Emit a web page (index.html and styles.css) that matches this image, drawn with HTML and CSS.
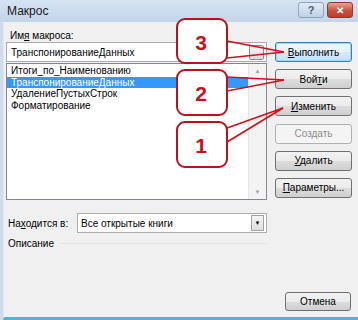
FILE: index.html
```html
<!DOCTYPE html>
<html>
<head>
<title>Макрос</title>
<link rel="stylesheet" href="styles.css">
</head>
<body>
<div class="window">
  <div class="titlebar">
    <span class="title">Макрос</span>
    <div class="caption-buttons">
      <span class="help-btn">?</span>
      <span class="close-btn">&#x2715;</span>
    </div>
  </div>
  <div class="dialog">
    <div class="main">
      <div class="left">
        <div class="field-label">Им<u>я</u> макроса:</div>
        <div class="name-input">
          <span>ТранспонированиеДанных</span>
          <span class="ref-btn"></span>
        </div>
        <div class="macro-list">
          <ul class="items">
            <li>Итоги_по_Наименованию</li>
            <li class="selected">ТранспонированиеДанных</li>
            <li>УдалениеПустыхСтрок</li>
            <li>Форматирование</li>
          </ul>
          <div class="scrollbar">
            <span class="arrow">&#9650;</span>
            <span class="arrow">&#9660;</span>
          </div>
        </div>
      </div>
      <div class="actions">
        <button class="btn default"><u>В</u>ыполнить</button>
        <button class="btn">Вой<u>т</u>и</button>
        <button class="btn"><u>И</u>зменить</button>
        <button class="btn disabled">Создать</button>
        <button class="btn"><u>У</u>далить</button>
        <button class="btn"><u>П</u>араметры...</button>
      </div>
    </div>
    <div class="location">
      <span class="location-label">На<u>х</u>одится в:</span>
      <div class="combo">
        <span>Все открытые книги</span>
        <span class="combo-arrow">&#9660;</span>
      </div>
    </div>
    <div class="description">
      <span>Описание</span>
      <span class="group-line"></span>
    </div>
    <div class="footer">
      <button class="btn cancel">Отмена</button>
    </div>
  </div>

  <!-- callouts over the dialog -->
  <svg class="callouts" width="358" height="320" viewBox="0 0 358 320">
    <g class="pointer">
      <line x1="227" y1="41" x2="284" y2="52"/>
      <line x1="227" y1="58" x2="284" y2="52"/>
      <line x1="227" y1="77" x2="284" y2="80"/>
      <line x1="227" y1="91" x2="284" y2="80"/>
      <line x1="227" y1="128" x2="283" y2="108"/>
      <line x1="227" y1="142" x2="283" y2="108"/>
    </g>
    <rect class="bubble" x="177" y="19" width="50" height="44" rx="8"/>
    <rect class="bubble" x="177" y="70" width="50" height="45" rx="8"/>
    <rect class="bubble" x="177" y="122" width="50" height="45" rx="8"/>
    <text class="num" x="201" y="42">3</text>
    <text class="num" x="201" y="93">2</text>
    <text class="num" x="201" y="145">1</text>
  </svg>
</div>
</body>
</html>
```

FILE: styles.css
```css
body {
  margin: 0;
  font-family: "Liberation Sans", Arial, sans-serif;
  font-size: 10px;
  color: #000;
  background: #fff;
}

.window {
  position: relative;
  width: 358px;
  height: 320px;
  display: flex;
  flex-direction: column;
  background: #cfdcec;
  overflow: hidden;
}

/* Title bar */
.titlebar {
  height: 22px;
  display: flex;
  align-items: center;
  justify-content: space-between;
  padding: 0 5px 0 7px;
  background: linear-gradient(#d6e3f2, #c3d5ea);
  flex-shrink: 0;
}

.title {
  font-size: 12px;
  color: #1a1a1a;
}

.caption-buttons {
  display: flex;
  gap: 3px;
  align-self: flex-start;
  margin-top: 2px;
}

.help-btn,
.close-btn {
  width: 26px;
  height: 16px;
  border-radius: 3px;
  display: flex;
  align-items: center;
  justify-content: center;
  font-weight: bold;
  box-sizing: border-box;
}

.help-btn {
  background: linear-gradient(#e3ecf6, #bfd0e4);
  border: 1px solid #8ea5c2;
  color: #4a5d78;
  font-size: 11px;
}

.close-btn {
  background: linear-gradient(#e5a496, #c8503c 55%, #c23b28);
  border: 1px solid #8a3a30;
  color: #fff;
  font-size: 10px;
}

/* Dialog body */
.dialog {
  flex: 1;
  display: flex;
  flex-direction: column;
  background: #f0f0f0;
  margin-left: 3px;
  padding: 7px 0 0 2px;
  border-left: 1px solid #e2e8ef;
  border-bottom: 3px solid #4db6d6;
}

.main {
  display: flex;
}

.left {
  width: 261px;
  display: flex;
  flex-direction: column;
}

.field-label {
  height: 13px;
  line-height: 13px;
  padding-left: 4px;
}

.name-input {
  height: 20px;
  box-sizing: border-box;
  border: 1px solid #abadb3;
  background: #fff;
  display: flex;
  align-items: center;
  justify-content: space-between;
  padding: 0 2px 0 4px;
}

.ref-btn {
  width: 15px;
  height: 15px;
  box-sizing: border-box;
  border: 1px solid #8e8f8f;
  border-radius: 2px;
  background: linear-gradient(#f6f6f6, #dcdcdc);
}

.macro-list {
  margin-top: 1px;
  height: 137px;
  box-sizing: border-box;
  border: 1px solid #828790;
  background: #fff;
  display: flex;
}

.items {
  list-style: none;
  margin: 0;
  padding: 1px 0 0;
  flex: 1;
}

.items li {
  height: 11.5px;
  line-height: 11.5px;
  padding-left: 4px;
}

.items li.selected {
  background: #3399ff;
  color: #fff;
}

.scrollbar {
  width: 17px;
  background: #f3f3f3;
  border-left: 1px solid #e6e6e6;
  display: flex;
  flex-direction: column;
  justify-content: space-between;
  align-items: center;
  padding: 4px 0;
}

.arrow {
  font-size: 6px;
  color: #a0a0a0;
}

/* Buttons column */
.actions {
  width: 77px;
  margin-left: 8px;
  padding-top: 13px;
  display: flex;
  flex-direction: column;
  gap: 7.2px;
}

.btn {
  height: 20px;
  padding: 0;
  font-family: "Liberation Sans", Arial, sans-serif;
  font-size: 10px;
  color: #000;
  border: 1px solid #707070;
  border-radius: 3px;
  background: linear-gradient(#f2f2f2 0%, #ebebeb 50%, #dddddd 51%, #cfcfcf 100%);
}

.btn.default {
  border-color: #3c7fb1;
  box-shadow: inset 0 0 0 1px #9ad9f4;
  background: linear-gradient(#eef7fc 0%, #e3f1fa 50%, #d2eaf7 51%, #c4e2f3 100%);
}

.btn.disabled {
  border-color: #adb2b5;
  background: #f4f4f4;
  color: #8d8d8d;
}

/* Location row */
.location {
  margin-top: 13px;
  width: 261px;
  height: 20px;
  display: flex;
  align-items: center;
}

.location-label {
  width: 69px;
  padding-left: 2px;
}

.combo {
  flex: 1;
  height: 20px;
  box-sizing: border-box;
  border: 1px solid #abadb3;
  background: #fff;
  display: flex;
  align-items: center;
  justify-content: space-between;
  padding: 0 2px 0 3px;
}

.combo-arrow {
  width: 13px;
  height: 16px;
  box-sizing: border-box;
  border: 1px solid #a3a3a3;
  background: linear-gradient(#f4f4f4, #dedede);
  font-size: 6px;
  display: flex;
  align-items: center;
  justify-content: center;
}

/* Description group */
.description {
  margin-top: 3px;
  width: 261px;
  height: 14px;
  display: flex;
  align-items: center;
  padding-left: 2px;
  box-sizing: border-box;
}

.group-line {
  flex: 1;
  height: 1px;
  margin-left: 6px;
  background: #dfe3e6;
}

.footer {
  margin-top: 42px;
  display: flex;
  justify-content: flex-end;
  padding-right: 7px;
}

.btn.cancel {
  width: 66px;
  height: 19px;
}

/* Callouts */
.callouts {
  position: absolute;
  top: 0;
  left: 0;
  pointer-events: none;
}

.pointer line {
  stroke: #d0101a;
  stroke-width: 1.6;
}

.bubble {
  fill: #fff;
  stroke: #b8121b;
  stroke-width: 2;
}

.num {
  font-family: "Liberation Sans", Arial, sans-serif;
  font-size: 21px;
  font-weight: bold;
  fill: #c0141c;
  text-anchor: middle;
  dominant-baseline: central;
}
```
